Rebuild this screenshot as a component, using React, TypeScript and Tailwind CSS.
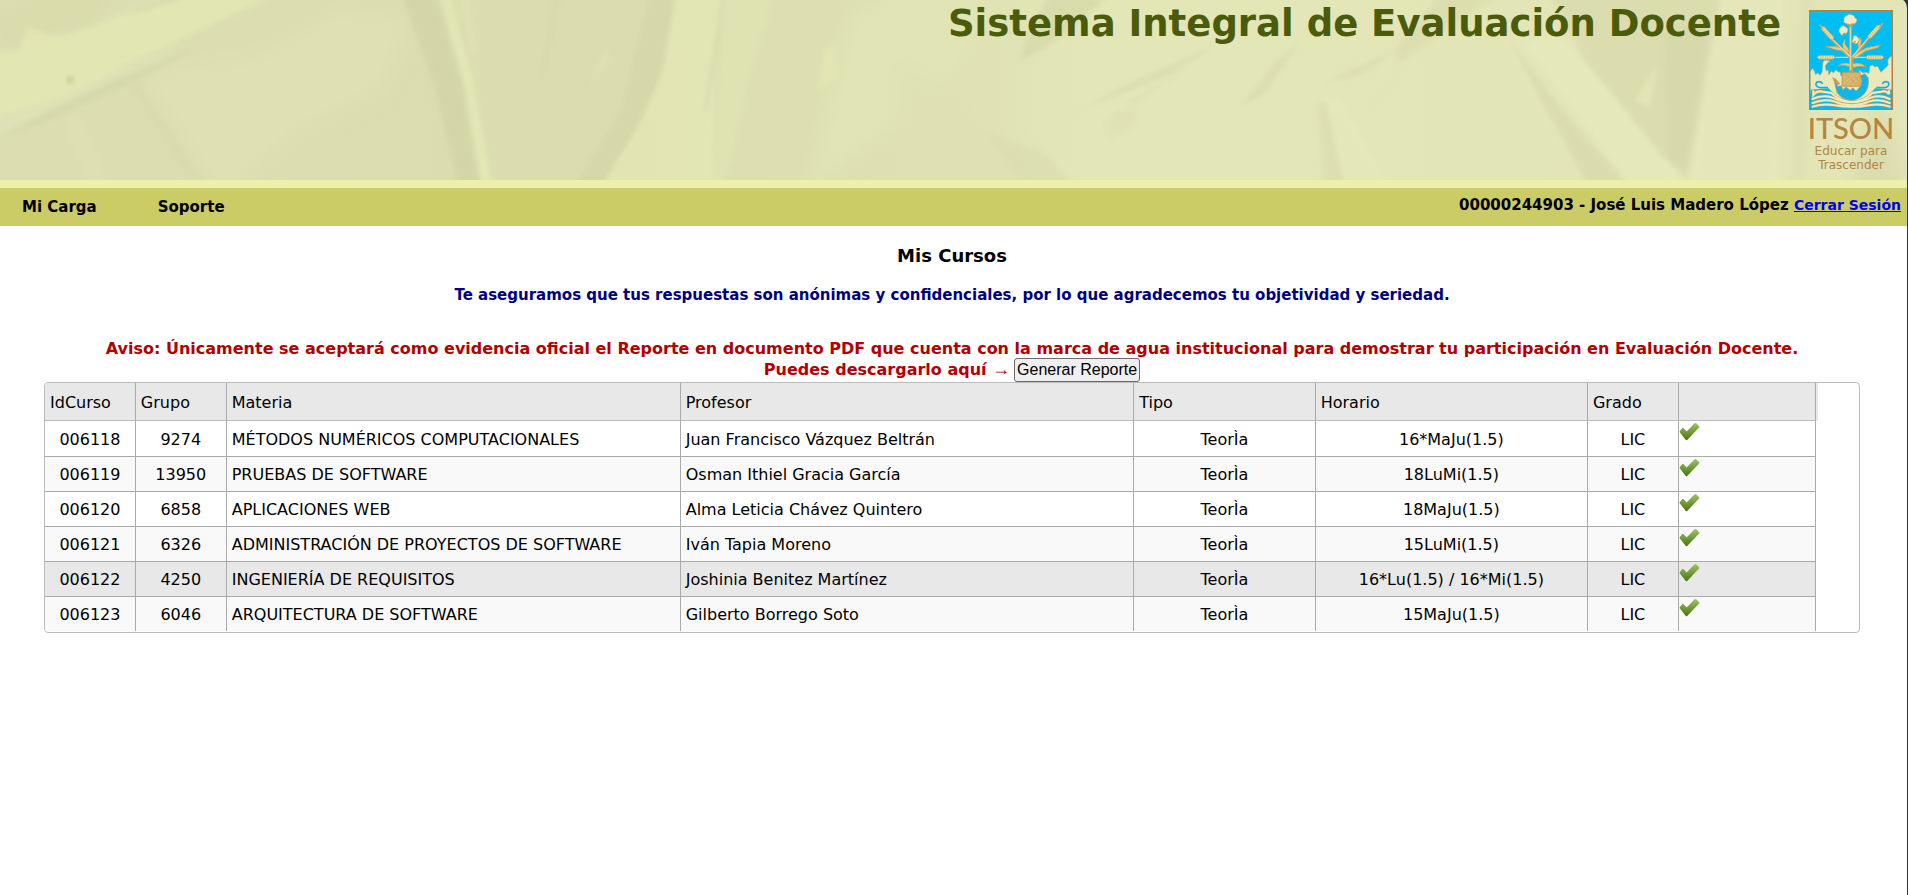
type Course = {
  id: string;
  group: string;
  subject: string;
  teacher: string;
  kind: string;
  schedule: string;
  level: string;
};

const courses: Course[] = [
  { id: "006118", group: "9274", subject: "MÉTODOS NUMÉRICOS COMPUTACIONALES", teacher: "Juan Francisco Vázquez Beltrán", kind: "TeorÌa", schedule: "16*MaJu(1.5)", level: "LIC" },
  { id: "006119", group: "13950", subject: "PRUEBAS DE SOFTWARE", teacher: "Osman Ithiel Gracia García", kind: "TeorÌa", schedule: "18LuMi(1.5)", level: "LIC" },
  { id: "006120", group: "6858", subject: "APLICACIONES WEB", teacher: "Alma Leticia Chávez Quintero", kind: "TeorÌa", schedule: "18MaJu(1.5)", level: "LIC" },
  { id: "006121", group: "6326", subject: "ADMINISTRACIÓN DE PROYECTOS DE SOFTWARE", teacher: "Iván Tapia Moreno", kind: "TeorÌa", schedule: "15LuMi(1.5)", level: "LIC" },
  { id: "006122", group: "4250", subject: "INGENIERÍA DE REQUISITOS", teacher: "Joshinia Benitez Martínez", kind: "TeorÌa", schedule: "16*Lu(1.5) / 16*Mi(1.5)", level: "LIC" },
  { id: "006123", group: "6046", subject: "ARQUITECTURA DE SOFTWARE", teacher: "Gilberto Borrego Soto", kind: "TeorÌa", schedule: "15MaJu(1.5)", level: "LIC" },
];

const activeId = "006122";

function BannerArt() {
  return (
    <svg className="absolute inset-0 h-full w-full" viewBox="0 0 1908 180" preserveAspectRatio="none" aria-hidden="true">
      <defs>
        <linearGradient id="wash" x1="0" x2="1">
          <stop offset="0" stopColor="#dcdeb1" />
          <stop offset="0.34" stopColor="#dbddaf" />
          <stop offset="0.42" stopColor="#dddfb1" />
          <stop offset="0.5" stopColor="#dfe1b3" />
          <stop offset="0.57" stopColor="#e3e6b6" />
          <stop offset="1" stopColor="#e3e5b7" />
        </linearGradient>
        <filter id="soft" x="-5%" y="-10%" width="110%" height="120%">
          <feGaussianBlur stdDeviation="2.5" />
        </filter>
        <filter id="softer" x="-5%" y="-10%" width="110%" height="120%">
          <feGaussianBlur stdDeviation="9" />
        </filter>
      </defs>
      <rect width="1908" height="180" fill="url(#wash)" />
      <g filter="url(#softer)">
        <path d="M140 75 L260 55 L340 10 L410 20 L380 90 L300 130 L220 200 L180 130Z" fill="#dfe1b3" />
        <path d="M810 190 L850 20 L900 -10 L1000 -10 L960 70 L900 120Z" fill="#e1e4b4" />
        <path d="M900 60 L1000 130 L1030 190 L900 190Z" fill="#dfe1b2" />
        <path d="M1850 190 L1880 100 L1908 190Z" fill="#dadcae" />
        <path d="M-10 20 L60 -10 L110 -10 L100 20 L0 50Z" fill="#dadcac" />
      </g>
      <g filter="url(#soft)" opacity="0.8">
        <path d="M-10 52 L20 50 L28 28 L52 36 L70 34 L94 26 L125 12 L165 -5 L275 -5 L140 58 L60 100 L-10 118Z" fill="#e4e8b4" />
        <path d="M-10 118 L60 98 L140 60 L190 40 L130 76 L60 106 L-10 140Z" fill="#dfe2b6" />
        <path d="M-10 142 L50 110 L120 78 L200 47 L130 84 L55 118Z" fill="#d5d8a8" />
        <path d="M120 16 L170 -5 L190 -5 L140 12Z" fill="#d7d9aa" />
        <path d="M128 80 L136 78 L205 182 L190 182Z" fill="#d9dbad" />
        <path d="M64 120 L82 120 L106 182 L90 182Z" fill="#dfe1b4" />
        <path d="M402 -5 L436 -5 L462 80 L480 185 L458 185 L434 85Z" fill="#d3d5a6" />
        <path d="M441 -5 L449 -5 L472 75 L492 185 L482 185 L466 90Z" fill="#e5e9b6" />
        <path d="M462 -5 L468 -5 L476 55 L472 55Z" fill="#e1e4b5" />
        <path d="M555 -5 L562 -5 L548 60 L538 90Z" fill="#d7d9aa" />
        <path d="M650 -5 L676 -5 L662 75 L640 125 L606 185 L575 185 L622 110Z" fill="#d5d7a8" />
        <path d="M605 55 L610 55 L590 85Z" fill="#e3e6b6" />
        <path d="M677 -5 L722 -5 L716 60 L712 185 L603 185 L645 115 L663 70Z" fill="#e4e7b5" />
        <path d="M725 -5 L775 -5 L752 70 L726 185 L712 185Z" fill="#e0e3b2" />
        <path d="M722 -5 L726 -5 L708 110 L704 110Z" fill="#d9dbad" />
        <path d="M826 48 L836 46 L836 80 L818 90Z" fill="#e4e7b3" />
        <path d="M1050 -5 L1112 -5 L1060 38 L1020 62 L1030 30Z" fill="#d7d9ab" />
        <path d="M1215 46 L1170 74 L1080 110 L1130 84Z M1200 62 L1130 102 L1106 130 L1112 116Z" fill="#d8daac" />
        <path d="M1104 122 L1138 104 L1140 122 L1112 142Z" fill="#e0e2b3" />
        <path d="M1006 140 L1040 150 L1075 185 L1020 185 L985 130Z" fill="#dcdeaf" />
        <path d="M1300 42 L1278 60 L1242 106 L1265 94Z M1400 48 L1365 72 L1320 86Z" fill="#dadcae" />
        <path d="M1400 76 L1382 96 L1356 122 L1372 106Z" fill="#d9dbac" />
        <path d="M1318 105 L1330 98 L1362 185 L1325 185Z" fill="#dcdeaf" />
        <path d="M1326 98 L1340 96 L1390 185 L1345 185Z" fill="#e5e8b8" />
        <path d="M1440 -5 L1500 -5 L1400 62 L1395 50Z" fill="#dbddaf" />
        <path d="M1550 -5 L1722 -5 L1712 60 L1688 178 L1650 145 L1585 60Z" fill="#dadcae" />
        <path d="M1665 30 L1712 20 L1686 172 L1668 158Z" fill="#d5d7a9" />
        <path d="M1510 40 L1556 100 L1628 185 L1588 185Z" fill="#d9dbac" />
        <path d="M1524 42 L1560 36 L1600 78 L1686 185 L1632 185Z" fill="#e6e9ba" />
        <path d="M1658 66 L1650 108 L1636 100Z" fill="#e3e6b4" />
        <path d="M1724 -5 L1785 -5 L1780 185 L1690 185 L1708 70Z" fill="#e6e8bb" />
        <path d="M1800 -5 L1815 -5 L1806 185 L1790 185Z" fill="#dfe1b3" />
        <ellipse cx="70" cy="80" rx="3" ry="3.5" fill="#b9bd8e" />
      </g>
    </svg>
  );
}

function Wheat({ transform }: { transform: string }) {
  return (
    <g transform={transform}>
      <path d="M-27 0 L-20 -6 L22 -6 L27 0 L22 6 L-20 6Z" fill="#ecdca2" stroke="#c49a52" strokeWidth="2" />
      <path d="M-16 -6v12M-9 -6v12M-2 -6v12M5 -6v12M12 -6v12M19 -6v12" stroke="#c79e58" strokeWidth="1.5" />
    </g>
  );
}

function Emblem() {
  return (
    <svg className="h-[100px] w-[84px]" viewBox="11 11 251 300" preserveAspectRatio="none" aria-hidden="true">
      <rect x="13" y="13" width="247" height="296" fill="#00bdf2" />
      <path
        d="M15 196 L21 186 L27 194 L31 205 L37 200 L44 207 L50 198 L52 178 Q51 160 62 162 L75 164 Q64 168 60 180 L62 194 L68 190 L70 206 L78 194 L84 200 L92 190 L98 198 L104 196 L106 208 L160 208 L162 192 L172 200 L182 198 L190 202 L193 180 L200 176 L208 182 L216 180 L226 198 L236 188 L248 176 Q242 156 258 150 L258 258 L220 254 Q186 290 140 292 Q92 290 62 256 L15 262Z"
        fill="#ece8bd"
        stroke="#b9ab72"
        strokeWidth="1.5"
      />
      <path d="M15 250 L70 246 Q96 282 140 284 Q182 282 208 246 L259 250 L259 308 L15 308Z" fill="#0cb8ea" />
      <g fill="none" stroke="#18b0dc" strokeWidth="5">
        <path d="M68 244 L44 244 Q26 240 34 228 Q44 222 52 232" />
        <path d="M212 244 L238 244 Q254 240 248 228 Q238 222 230 232" />
      </g>
      <g fill="none" stroke="#c4a05c" strokeWidth="9" strokeLinecap="round">
        <path d="M24 254 V266 Q34 252 52 256 L78 260 Q105 286 140 287 Q174 286 200 260 L226 256 Q244 252 250 264 V254" />
        <path d="M22 278 Q50 264 82 274 Q140 302 196 274 Q226 264 252 278" />
        <path d="M22 290 Q56 276 88 286 Q140 308 190 286 Q222 276 252 290" />
        <path d="M22 301 Q56 290 88 297 Q140 306 190 297 Q222 290 252 301" />
      </g>
      <g fill="none" stroke="#f0eabc" strokeWidth="6" strokeLinecap="round">
        <path d="M24 254 V266 Q34 252 52 256 L78 260 Q105 286 140 287 Q174 286 200 260 L226 256 Q244 252 250 264 V254" />
        <path d="M22 278 Q50 264 82 274 Q140 302 196 274 Q226 264 252 278" />
        <path d="M22 290 Q56 276 88 286 Q140 308 190 286 Q222 276 252 290" />
        <path d="M22 301 Q56 290 88 297 Q140 306 190 297 Q222 290 252 301" />
      </g>
      <path d="M86 222 L94 228 L96 240 L108 238 L112 250 L122 242 L134 252 L142 244 L152 254 L166 238 L168 222 L164 208 L178 202 L188 214 Q192 244 176 262 Q158 282 136 282 Q108 280 94 258Z" fill="#10b6e8" stroke="#b8a468" strokeWidth="2" />
      <path d="M80 212 L92 218 L104 232 L98 236 L86 226Z" fill="#c99b55" />
      <g fill="none" stroke="#c69f57" strokeLinejoin="round">
        <path d="M135 200 V52" strokeWidth="8" />
        <path d="M137 198 V150" strokeWidth="13" />
        <path d="M136 156 L108 130 L78 98" strokeWidth="7" />
        <path d="M138 158 L168 124 L192 92" strokeWidth="7" />
      </g>
      <g fill="#e0ca85" stroke="#c49a50" strokeWidth="2">
        <path d="M132 154 L112 134 L88 130 L58 120 L88 120 L114 126 L136 148Z" />
        <path d="M138 160 L152 142 L182 124 L226 116 L216 124 L180 134 L158 150Z" />
        <path d="M118 132 Q104 114 120 98 L118 112 Q130 126 134 142Z" />
        <path d="M160 134 Q154 110 162 92 Q170 102 166 112Z" />
        <path d="M132 182 Q112 172 98 180 Q108 166 134 172Z" />
        <path d="M142 184 Q160 176 180 182 Q168 166 140 172Z" />
      </g>
      <path d="M135 192 V60 M136 152 L80 98 M140 152 L192 90 M90 153 H128 M146 153 H184" fill="none" stroke="#e7d395" strokeWidth="4" />
      <Wheat transform="translate(62 153)" />
      <Wheat transform="translate(208 153) scale(-1 1)" />
      <Wheat transform="translate(66 80) rotate(48)" />
      <Wheat transform="translate(206 76) rotate(132)" />
      <path d="M42 54 L52 68 M232 50 L220 66" stroke="#d2ac65" strokeWidth="4" />
      <g fill="#f1ecc6" stroke="#c3a974" strokeWidth="2">
        <path d="M124 28 Q130 20 140 26 Q146 24 148 34 Q158 38 152 48 Q148 56 138 52 Q130 60 124 52 Q112 50 116 40 Q114 30 124 28Z" />
        <path d="M106 62 Q114 54 120 62 Q130 66 126 76 Q124 84 116 82 Q108 92 104 80 Q96 74 106 62Z" />
        <path d="M144 90 Q152 84 156 92 Q164 98 158 108 Q152 116 146 110 Q136 108 142 100Z" />
      </g>
      <path d="M126 52 L136 60 L146 52 M112 84 L120 80 M144 110 L150 104" fill="none" stroke="#c89c50" strokeWidth="4" />
      <rect x="110" y="198" width="54" height="42" rx="3" fill="#d6b36c" stroke="#c69b51" strokeWidth="3" />
      <path d="M114 216 L130 202 M114 232 L146 202 M124 236 L160 204 M140 236 L160 218" stroke="#e0c684" strokeWidth="2" />
      <path d="M122 204 L132 214 M136 218 L150 232 M148 210 L158 222" stroke="#c2934f" strokeWidth="2" />
      <rect x="12.5" y="12.5" width="248" height="297" fill="none" stroke="#b07f42" strokeWidth="3" />
    </svg>
  );
}

function CheckIcon() {
  return (
    <svg className="mt-[1px] block h-[19px] w-[21px]" viewBox="0 0 21 19" role="img" aria-label="Evaluado">
      <defs>
        <linearGradient id="leaf" x1="0" y1="0" x2="0" y2="1">
          <stop offset="0" stopColor="#9cc564" />
          <stop offset="0.5" stopColor="#739d3a" />
          <stop offset="1" stopColor="#4a7512" />
        </linearGradient>
      </defs>
      <path d="M0.8 9 L3.3 6 Q4 5.6 4.6 6.2 L7.6 9.4 L15.6 1.2 Q16.4 0.6 17.2 1.2 L20.2 4.2 Q20.6 4.8 20.1 5.4 L8.2 18 Q7.5 18.5 6.8 18 L0.9 10.4 Q0.3 9.7 0.8 9Z" fill="url(#leaf)" />
    </svg>
  );
}

const headCell = "h-[38px] border-r border-b border-r-[#aaa] border-b-[#bbb] bg-[#e8e8e8] pt-[3px] pr-1 pb-0 pl-[5px] text-left font-normal";
const cell = "h-[35px] border-r border-b border-[#aaa] pt-[2px] pr-1 pb-0 pl-[5px] group-first:h-[36px] group-last:h-[34px] group-last:border-b-0";
const centered = "h-[35px] border-r border-b border-[#aaa] px-1 pt-[2px] pb-0 text-center group-first:h-[36px] group-last:h-[34px] group-last:border-b-0";

export default function App() {
  return (
    <div className="min-h-screen border-r border-[#333] bg-white font-['Verdana','DejaVu_Sans',sans-serif] text-black">
      <header>
        <div className="relative h-[180px] overflow-hidden bg-[#dfe1b3]">
          <BannerArt />
          <svg className="absolute top-0 right-0 h-2 w-1" viewBox="0 0 4 8" aria-hidden="true">
            <path d="M0 0 H4 V8 Q3.500 2 0 0Z" fill="#333" />
          </svg>
          <div className="relative flex items-start justify-end gap-7 pr-[14px]">
            <h1 className="text-[37px] leading-[47px] font-bold text-[#4b5b0c]">Sistema Integral de Evaluación Docente</h1>
            <div className="flex w-[84px] flex-col items-center pt-[10px] text-[#b5843f]">
              <Emblem />
              <span className="mt-[2px] font-['Lato',sans-serif] text-[29px] leading-8 font-medium">ITSON</span>
              <span className="font-['DejaVu_Sans',sans-serif] text-[12px] leading-[14px] whitespace-nowrap">Educar para</span>
              <span className="font-['DejaVu_Sans',sans-serif] text-[12px] leading-[14px] whitespace-nowrap">Trascender</span>
            </div>
          </div>
        </div>
        <div className="h-2 bg-[#ecf0a8]" />
        <nav className="flex h-[38px] items-center justify-between bg-[#cccc66] pr-[6px] pl-[22px] text-[15px] leading-5 font-bold">
          <div className="flex gap-[61px]">
            <a href="#carga">Mi Carga</a>
            <a href="#soporte">Soporte</a>
          </div>
          <div className="pb-1">
            00000244903 - José Luis Madero López{" "}
            <a href="#salir" className="text-[14px] text-[#0000ee] underline">
              Cerrar Sesión
            </a>
          </div>
        </nav>
      </header>

      <main className="pt-[18px] pr-[47px] pl-11">
        <h2 className="text-center text-[18px] leading-6 font-bold">Mis Cursos</h2>
        <p className="mt-[17px] text-center text-[15px] leading-5 font-bold text-[#000080]">
          Te aseguramos que tus respuestas son anónimas y confidenciales, por lo que agradecemos tu objetividad y seriedad.
        </p>
        <div className="mt-[34px] text-center text-[16px] leading-5 font-bold text-[#b30000]">
          <p>
            Aviso: Únicamente se aceptará como evidencia oficial el Reporte en documento PDF que cuenta con la marca de agua
            institucional para demostrar tu participación en Evaluación Docente.
          </p>
          <div className="flex h-[23px] items-end justify-center gap-1">
            <span className="pb-[2px]">
              Puedes descargarlo aquí <span className="font-['Liberation_Sans'] text-[18px] leading-none font-normal">→</span>
            </span>
            <button type="button" className="h-6 shrink-0 rounded-[3px] border border-[#6b6b6b] bg-[#efefef] px-[2px] font-['Liberation_Sans',sans-serif] text-[16px] leading-5 font-normal text-black">
              Generar Reporte
            </button>
          </div>
        </div>

        <div className="overflow-hidden rounded-[4px] border border-[#bbb] pb-[1px]">
          <table className="w-[97.65%] table-fixed border-separate border-spacing-0 text-[16px] leading-5">
            <colgroup>
              <col className="w-[5.13%]" />
              <col className="w-[5.13%]" />
              <col className="w-[25.63%]" />
              <col className="w-[25.6%]" />
              <col className="w-[10.25%]" />
              <col className="w-[15.37%]" />
              <col className="w-[5.13%]" />
              <col />
            </colgroup>
            <thead>
              <tr>
                <th className={headCell}>IdCurso</th>
                <th className={headCell}>Grupo</th>
                <th className={headCell}>Materia</th>
                <th className={headCell}>Profesor</th>
                <th className={headCell}>Tipo</th>
                <th className={headCell}>Horario</th>
                <th className={headCell}>Grado</th>
                <th className={headCell + " shadow-[2px_0_0_#e8e8e8]"} aria-label="Estado" />
              </tr>
            </thead>
            <tbody>
              {courses.map((c) => (
                <tr key={c.id} className={c.id === activeId ? "group bg-[#e8e8e8]" : "group odd:bg-white even:bg-[#f9f9f9]"}>
                  <td className={centered}>{c.id}</td>
                  <td className={centered}>{c.group}</td>
                  <td className={cell}>{c.subject}</td>
                  <td className={cell}>{c.teacher}</td>
                  <td className={centered}>{c.kind}</td>
                  <td className={centered}>{c.schedule}</td>
                  <td className={centered}>{c.level}</td>
                  <td className="border-r border-b border-[#aaa] p-0 align-top group-last:border-b-0">
                    <CheckIcon />
                  </td>
                </tr>
              ))}
            </tbody>
          </table>
        </div>
      </main>
    </div>
  );
}
